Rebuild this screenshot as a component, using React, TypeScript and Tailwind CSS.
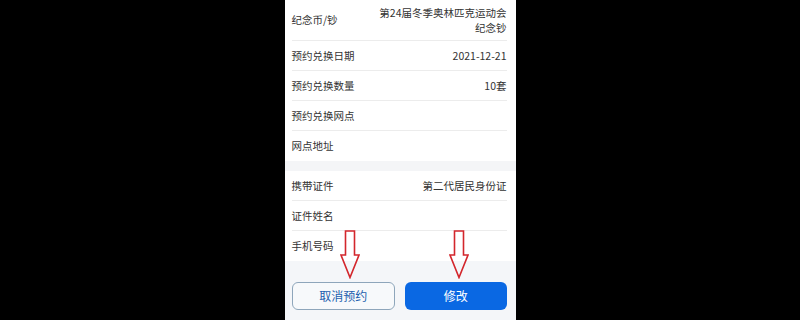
const font = { fontFamily: '"Noto Sans CJK SC", "Noto Sans", sans-serif' };

function Row({ label, value, tall, last }: { label: string; value?: React.ReactNode; tall?: boolean; last?: boolean }) {
  return (
    <div className={`flex items-center justify-between ${tall ? 'h-[41px]' : 'h-[30px]'} ${last ? '' : 'border-b border-[#ececec]'}`}>
      <span className="text-[10.5px] text-[#333]">{label}</span>
      {value && <span className="text-[10.5px] text-[#333] text-right leading-[15px]">{value}</span>}
    </div>
  );
}

function Arrow({ className }: { className: string }) {
  return (
    <svg className={`absolute w-[20px] h-[49px] ${className}`} viewBox="0 0 20 49" fill="none">
      <path d="M5.5 1 L14.5 1 L14.5 25 L19 25 L10 47.5 L1 25 L5.5 25 Z" stroke="#d3262c" strokeWidth="1.6" strokeLinejoin="miter" />
    </svg>
  );
}

export default function App() {
  return (
    <div className="w-[800px] h-[320px] bg-black overflow-hidden" style={font}>
      <div className="relative mx-auto w-[231px] h-full bg-white flex flex-col">
        <div className="pl-[7px] pr-[9px]">
          <Row label="纪念币/钞" value={<>第24届冬季奥林匹克运动会<br />纪念钞</>} tall />
          <Row label="预约兑换日期" value="2021-12-21" />
          <Row label="预约兑换数量" value="10套" />
          <Row label="预约兑换网点" />
          <Row label="网点地址" last />
        </div>
        <div className="h-[10px] bg-[#f4f5f7]" />
        <div className="pl-[7px] pr-[9px]">
          <Row label="携带证件" value="第二代居民身份证" />
          <Row label="证件姓名" />
          <Row label="手机号码" last />
        </div>
        <div className="flex-1 bg-[#f4f6f9] pl-[7px] pr-[9px] pt-[21px] flex gap-[10px]">
          <button className="flex-1 h-[28px] rounded-[6px] border border-[#8ea6bb] bg-[#f7f9fb] text-[12px] text-[#1d5fae]">取消预约</button>
          <button className="flex-1 h-[28px] rounded-[6px] bg-[#0a68e3] text-[12px] text-white">修改</button>
        </div>
        <Arrow className="left-[55px] top-[230px]" />
        <Arrow className="left-[164px] top-[230px]" />
      </div>
    </div>
  );
}
